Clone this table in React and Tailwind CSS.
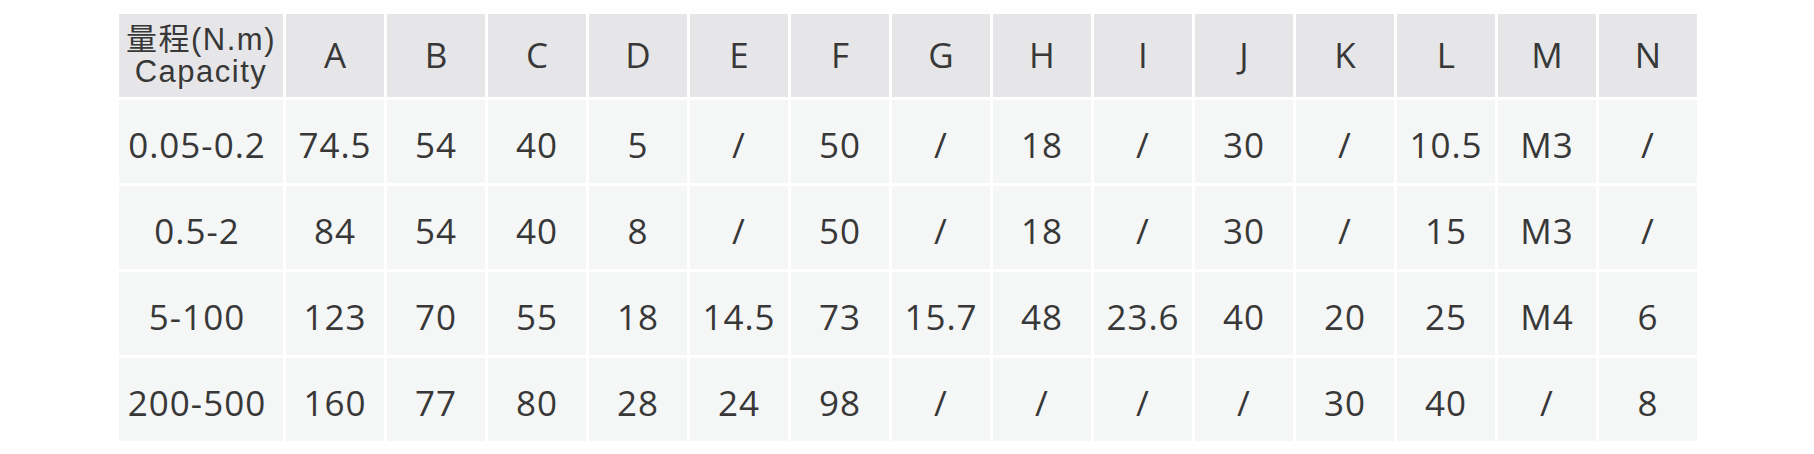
const cols = ['A', 'B', 'C', 'D', 'E', 'F', 'G', 'H', 'I', 'J', 'K', 'L', 'M', 'N'];

const rows = [
    ['0.05-0.2', '74.5', '54', '40', '5', '/', '50', '/', '18', '/', '30', '/', '10.5', 'M3', '/'],
    ['0.5-2', '84', '54', '40', '8', '/', '50', '/', '18', '/', '30', '/', '15', 'M3', '/'],
    ['5-100', '123', '70', '55', '18', '14.5', '73', '15.7', '48', '23.6', '40', '20', '25', 'M4', '6'],
    ['200-500', '160', '77', '80', '28', '24', '98', '/', '/', '/', '/', '30', '40', '/', '8'],
];

export default function App() {
    return (
        <div className="w-[1814px] h-[454px] bg-white pt-[14px] pl-[119px]">
            <div
                className="grid grid-cols-[164px_repeat(14,98px)] auto-rows-[83px] gap-[3px] w-max text-[#383838]"
                style={{ fontFamily: '"Open Sans", "Noto Sans", sans-serif' }}
            >
                {/* Header */}
                <div
                    className="bg-[#e6e6e8] flex flex-col items-center justify-center text-[31px] leading-[32px] tracking-[1.5px]"
                    style={{ fontFamily: '"Liberation Sans", "Noto Sans CJK SC", sans-serif' }}
                >
                    <span>量程(N.m)</span>
                    <span>Capacity</span>
                </div>
                {cols.map((c) => (
                    <div key={c} className="bg-[#e6e6e8] flex items-center justify-center text-[35px]">
                        {c}
                    </div>
                ))}

                {/* Body */}
                {rows.map((row, i) =>
                    row.map((cell, j) => (
                        <div
                            key={`${i}-${j}`}
                            className={`bg-[#f5f6f6] flex items-center justify-center pt-[8px] text-[35px] tracking-[1px] ${j === 0 ? 'pr-[8px]' : ''}`}
                        >
                            {cell}
                        </div>
                    ))
                )}
            </div>
        </div>
    );
}
